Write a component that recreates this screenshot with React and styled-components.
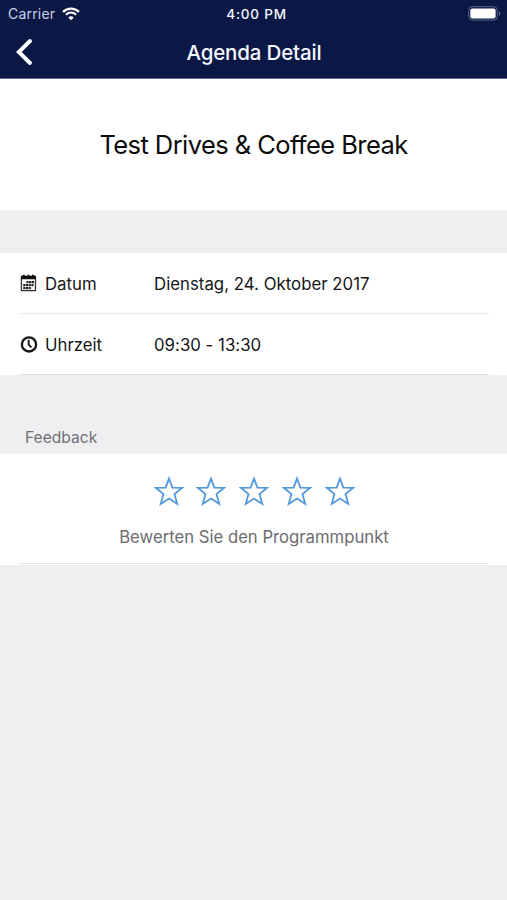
import React from "react";
import styled, { createGlobalStyle } from "styled-components";

const GlobalStyle = createGlobalStyle`
  * {
    box-sizing: border-box;
  }

  body {
    margin: 0;
    background-color: #efeff2;
    font-family: Inter, "Liberation Sans", sans-serif;
    color: #151517;
  }
`;

const PageWrap = styled.div`
  width: 100%;
  min-height: 900px;
  background-color: #efeff2;
`;

const Header = styled.header`
  height: 79px;
  background-color: #0b1846;
  border-bottom: 1px solid #5d6a94;
  color: #f4f7ff;
`;

const StatusBar = styled.div`
  display: grid;
  grid-template-columns: 1fr auto 1fr;
  align-items: center;
  height: 27px;
  padding: 0 6px 0 8px;
`;

const Carrier = styled.div`
  display: flex;
  align-items: center;
  gap: 6.5px;
  font-size: 14px;
  letter-spacing: 0.2px;
  color: #c9d0e6;
`;

const Clock = styled.div`
  font-size: 13.5px;
  font-weight: 500;
  letter-spacing: 0.8px;
  padding-left: 4px;
`;

const BatteryWrap = styled.div`
  display: flex;
  justify-content: flex-end;
`;

const NavBar = styled.div`
  display: grid;
  grid-template-columns: 48px 1fr 48px;
  align-items: center;
  height: 51px;
`;

const BackButton = styled.button`
  display: flex;
  height: 51px;
  padding: 11px 0 0 15px;
  border: 0;
  background: none;
  color: #ffffff;
`;

const NavTitle = styled.div`
  padding-left: 1px;
  text-align: center;
  font-size: 20.5px;
  font-weight: 500;
  letter-spacing: -0.15px;
`;

const TitleWrap = styled.div`
  display: flex;
  justify-content: center;
  align-items: center;
  height: 131px;
  background-color: #ffffff;
`;

const Title = styled.h1`
  margin: 0;
  font-size: 25.5px;
  font-weight: 400;
  letter-spacing: -0.57px;
  color: #0c0c0c;
`;

const InfoList = styled.div`
  margin-top: 43px;
  background-color: #ffffff;
`;

const InfoRow = styled.div`
  display: flex;
  align-items: center;
  height: 61px;
  margin: 0 18px 0 20px;
  border-bottom: 1px solid ${(props) => (props.$last ? "#dfdfe2" : "#e9e9eb")};
  font-size: 16.8px;
  line-height: 20px;
`;

const InfoIcon = styled.div`
  display: flex;
  width: 25px;
`;

const InfoLabel = styled.div`
  width: 109px;
  padding-top: 1px;
`;

const InfoValue = styled.div`
  padding-top: 1px;
  letter-spacing: 0.02px;
  white-space: nowrap;
`;

const SectionLabel = styled.div`
  display: flex;
  align-items: flex-end;
  height: 79px;
  padding: 0 0 7px 25px;
  font-size: 15.6px;
  color: #717175;
`;

const RatingWrap = styled.div`
  height: 111px;
  padding: 0 18px 0 20px;
  background-color: #ffffff;
`;

const RatingInner = styled.div`
  display: flex;
  flex-direction: column;
  align-items: center;
  height: 110px;
  padding-top: 22px;
  border-bottom: 1px solid #e6e6e9;
`;

const Stars = styled.div`
  display: flex;
  gap: 12.8px;
  padding-right: 0.6px;
`;

const RatingText = styled.div`
  margin-top: 20px;
  padding-right: 1px;
  font-size: 16.7px;
  line-height: 20px;
  color: #6c6c6f;
`;

const WifiIcon = () => (
  <svg width="18" height="14" viewBox="0 0 17 13" fill="none">
    <path d="M1 4.5C5.2 .3 11.8 .3 16 4.5" stroke="#fff" strokeWidth="2.2" />
    <path d="M3.7 7.2C6.5 4.6 10.5 4.6 13.3 7.2" stroke="#fff" strokeWidth="2" />
    <path d="M5.9 9.7C7.4 8.3 9.6 8.3 11.1 9.7L8.5 12.4Z" fill="#fff" />
  </svg>
);

const BatteryIcon = () => (
  <svg width="33" height="15" viewBox="0 0 33 15" fill="none">
    <rect x="0.7" y="0.7" width="28.6" height="13.4" rx="3.6" stroke="#5d6690" />
    <rect x="2.3" y="2.4" width="25.3" height="10" rx="2" fill="#fff" />
    <path d="M31 5.2C32.5 6 32.5 9 31 9.8Z" fill="#777fa5" />
  </svg>
);

const BackIcon = () => (
  <svg width="19" height="28" viewBox="0 0 19 28" fill="none">
    <path
      d="M15 3L3.8 14L15 25"
      stroke="currentColor"
      strokeWidth="3.9"
      strokeLinecap="round"
      strokeLinejoin="miter"
    />
  </svg>
);

const CalendarIcon = () => (
  <svg width="17" height="18" viewBox="0 0 17 18" fill="none">
    <path d="M.8 1.8H2.8V.8H4.8V1.8H7.4V.8H9.4V1.8H12V.8H14V1.8H16V5.3H.8Z" fill="#111" />
    <path d="M1.4 5V16.6H15.5V5" stroke="#333" strokeWidth="1.3" />
    <path
      d="M6.4 8.2H14M3.2 11.2H14M3.2 14.1H11.4"
      stroke="#222"
      strokeWidth="2.2"
      strokeDasharray="2.2 .5"
    />
  </svg>
);

const ClockIcon = () => (
  <svg width="18" height="18" viewBox="0 0 18 18" fill="none">
    <circle cx="9" cy="9.4" r="7.1" stroke="#151517" strokeWidth="2.3" />
    <path d="M8.7 4.8V9.6L11.4 12.3" stroke="#151517" strokeWidth="1.9" />
  </svg>
);

const StarIcon = () => (
  <svg width="30" height="31" viewBox="0 0 30 31" fill="none">
    <path
      d="M15 2.6L18.4 11.6L28 11.9L20.5 18L23.3 28L15 22.6L6.7 28L9.5 18L2 11.9L11.6 11.6Z"
      stroke="#5499db"
      strokeWidth="1.8"
    />
  </svg>
);

const App = () => {
  const infoList = [
    {
      label: "Datum",
      value: "Dienstag, 24. Oktober 2017",
      icon: <CalendarIcon />,
    },
    { label: "Uhrzeit", value: "09:30 - 13:30", icon: <ClockIcon /> },
  ];

  return (
    <>
      <GlobalStyle />
      <PageWrap>
        <Header>
          <StatusBar>
            <Carrier>
              <span>Carrier</span>
              <WifiIcon />
            </Carrier>
            <Clock>4:00 PM</Clock>
            <BatteryWrap>
              <BatteryIcon />
            </BatteryWrap>
          </StatusBar>
          <NavBar>
            <BackButton aria-label="Back">
              <BackIcon />
            </BackButton>
            <NavTitle>Agenda Detail</NavTitle>
          </NavBar>
        </Header>
        <TitleWrap>
          <Title>Test Drives &amp; Coffee Break</Title>
        </TitleWrap>
        <InfoList>
          {infoList.map((info, idx) => {
            return (
              <InfoRow
                key={`infoRow-${idx}`}
                $last={idx === infoList.length - 1}
              >
                <InfoIcon>{info.icon}</InfoIcon>
                <InfoLabel>{info.label}</InfoLabel>
                <InfoValue>{info.value}</InfoValue>
              </InfoRow>
            );
          })}
        </InfoList>
        <SectionLabel>Feedback</SectionLabel>
        <RatingWrap>
          <RatingInner>
            <Stars>
              {[1, 2, 3, 4, 5].map((star) => (
                <StarIcon key={`star-${star}`} />
              ))}
            </Stars>
            <RatingText>Bewerten Sie den Programmpunkt</RatingText>
          </RatingInner>
        </RatingWrap>
      </PageWrap>
    </>
  );
};
export default App;
